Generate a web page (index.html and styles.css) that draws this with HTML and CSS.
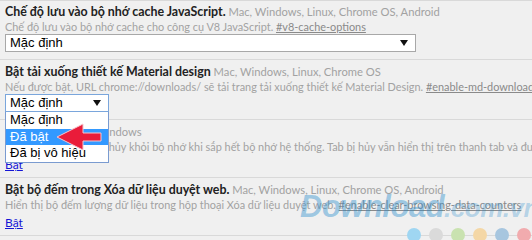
FILE: index.html
```html
<html lang="vi">
<head>
    <meta charset="utf-8">
    <title>Flags</title>
    <link rel="stylesheet" href="styles.css">
</head>
<body>
<div class="flags">
    <div class="flag first">
        <div class="title"><b>Chế độ lưu vào bộ nhớ cache JavaScript.</b> Mac, Windows, Linux, Chrome OS, Android</div>
        <div class="desc">Chế độ lưu vào bộ nhớ cache cho công cụ V8 JavaScript. <a>#v8-cache-options</a></div>
        <div class="select wide">Mặc định<span class="caret"></span></div>
    </div>
    <div class="flag with-menu">
        <div class="title"><b>Bật tải xuống thiết kế Material design</b> Mac, Windows, Linux, Chrome OS</div>
        <div class="desc">Nếu được bật, URL chrome://downloads/ sẽ tải trang tải xuống thiết kế Material Design. <a>#enable-md-downloads</a></div>
        <div class="select narrow focused">Mặc định<span class="caret"></span></div>
        <ul class="menu">
            <li>Mặc định</li>
            <li class="active">Đã bật</li>
            <li>Đã bị vô hiệu</li>
        </ul>
        <svg class="pointer" width="50" height="30" viewBox="0 0 50 30">
            <path d="M2 14 L28 1 L28 10 L46 10 L46 18 L28 18 L28 27 Z" fill="#ea1c3a" stroke="#f6c6cc" stroke-width="1"/>
        </svg>
    </div>
    <div class="flag">
        <div class="title"><b>Loại bỏ tab</b> Mac, Windows</div>
        <div class="desc">Các tab sẽ tự động bị hủy khỏi bộ nhớ khi sắp hết bộ nhớ hệ thống. Tab bị hủy vẫn hiển thị trên thanh tab và được tải lại khi nhấp vào. <a>#automatic-tab-discarding</a></div>
        <div class="action"><a>Bật</a></div>
    </div>
    <div class="flag">
        <div class="title"><b>Bật bộ đếm trong Xóa dữ liệu duyệt web.</b> Mac, Windows, Linux, Chrome OS, Android</div>
        <div class="desc">Hiển thị bộ đếm lượng dữ liệu trong hộp thoại Xóa dữ liệu duyệt web. <a>#enable-clear-browsing-data-counters</a></div>
        <div class="action"><a>Bật</a></div>
    </div>
</div>
<div class="watermark">
    <span class="brand">Download<small>.com.vn</small></span>
    <span class="dots">
        <i class="d1"></i><i class="d2"></i><i class="d3"></i><i class="d4"></i><i class="d5"></i><i class="d6"></i>
    </span>
</div>
</body>
</html>
```

FILE: styles.css
```css
* {
    margin: 0;
    padding: 0;
    box-sizing: border-box;
}

html,
body {
    height: 100%;
    overflow: hidden;
}

body {
    background-color: #f0f0f0;
    font-family: Lato, "Open Sans", sans-serif;
    font-size: 11.2px;
    color: #a2a2a2;
    position: relative;
}

.flags {
    width: 532px;
}

.flag {
    position: relative;
    padding: 4px 0 5px 5px;
    border-bottom: 1px solid #d9d9d9;
}

.flag.first {
    border-top: 1px solid #d9d9d9;
    padding-top: 3px;
}

.flag .title,
.flag .desc {
    height: 15px;
    line-height: 15px;
    white-space: nowrap;
}

.flag .desc {
    font-size: 10.9px;
}

.flag .title b {
    color: #222222;
    font-size: 12.4px;
    font-weight: 700;
}

.flag .desc a {
    color: #8a8a8a;
    text-decoration: underline;
}

.flag .action {
    margin-top: 3px;
    height: 15px;
    line-height: 15px;
    font-size: 12px;
}

.flag .action a {
    color: #1515d6;
    text-decoration: underline;
}

.select {
    position: relative;
    height: 18px;
    margin-bottom: 2px;
    padding-left: 4px;
    background-color: #ffffff;
    border: 1px solid #a8a8a8;
    font-family: "Liberation Sans", Arial, sans-serif;
    font-size: 13px;
    line-height: 16px;
    color: #000000;
}

.select.wide {
    width: 411px;
}

.select.narrow {
    width: 104px;
}

.select.focused {
    border-color: #7aa6dc;
}

.select .caret {
    position: absolute;
    right: 7px;
    top: 5px;
    border-left: 4px solid transparent;
    border-right: 4px solid transparent;
    border-top: 6px solid #111111;
}

.menu {
    position: absolute;
    left: 5px;
    top: 52px;
    width: 104px;
    z-index: 2;
    list-style: none;
    background-color: #ffffff;
    border: 1px solid #7a9bd0;
    border-top: none;
    font-family: "Liberation Sans", Arial, sans-serif;
    font-size: 13px;
    color: #000000;
}

.menu li {
    height: 16.5px;
    line-height: 16px;
    padding-left: 4px;
}

.menu li.active {
    background-color: #3399ff;
    color: #ffffff;
}

.pointer {
    position: absolute;
    left: 55px;
    top: 63px;
    z-index: 3;
}

.watermark {
    position: absolute;
    left: 300px;
    top: 191px;
    width: 260px;
    pointer-events: none;
}

.watermark .brand {
    display: block;
    font-family: "Liberation Sans", Arial, sans-serif;
    font-weight: 700;
    font-style: italic;
    font-size: 31px;
    line-height: 32px;
    letter-spacing: -0.5px;
    color: rgba(40, 140, 205, 0.42);
}

.watermark .brand small {
    font-size: 26px;
    color: rgba(40, 140, 205, 0.3);
}

.watermark .dots {
    display: flex;
    gap: 8px;
    margin-left: 107px;
    margin-top: 4px;
}

.watermark .dots i {
    display: block;
    width: 14px;
    height: 14px;
    border-radius: 50%;
}

.d1 { background-color: #9fd6f2; }
.d2 { background-color: #dadada; }
.d3 { background-color: #c9e2b0; }
.d4 { background-color: #f4d7a6; }
.d5 { background-color: #a7c6df; }
.d6 { background-color: #f1abae; }
```
